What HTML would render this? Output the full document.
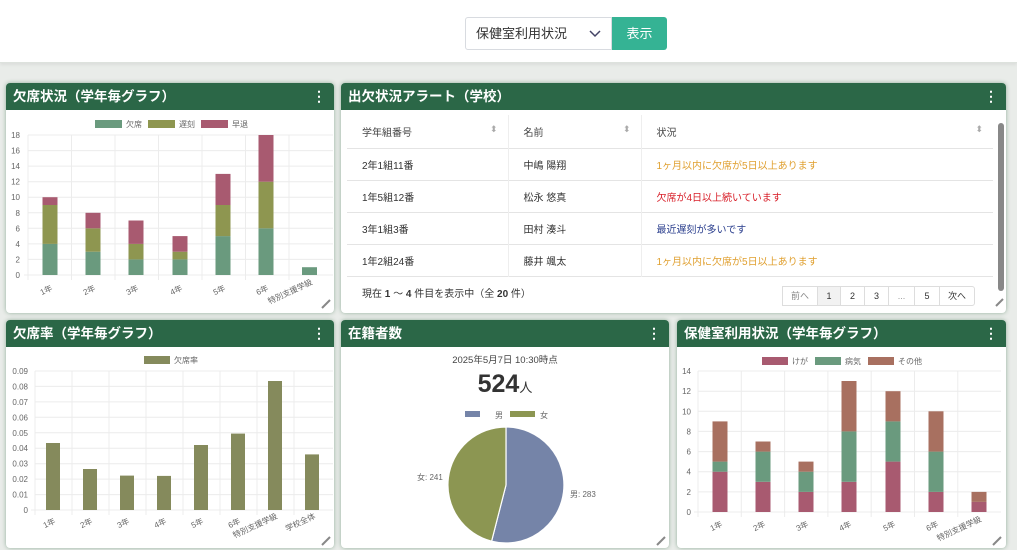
<!DOCTYPE html>
<html><head><meta charset="utf-8"><style>
*{box-sizing:border-box;margin:0;padding:0}
body{width:1017px;height:550px;overflow:hidden;background:#e9ece9;font-family:"Liberation Sans","Noto Sans CJK JP",sans-serif;position:relative;color:#333}
.top{position:absolute;left:0;top:0;width:1017px;height:63px;background:#fff;border-bottom:1px solid #dde2dd;box-shadow:0 2px 3px rgba(0,0,0,.06)}
.sel{position:absolute;left:465px;top:17px;width:147px;height:33px;border:1px solid #d8dbe0;border-radius:3px 0 0 3px;font-size:13px;line-height:31px;padding-left:10px;color:#333;background:#fff}
.btn{position:absolute;left:612px;top:17px;width:55px;height:33px;background:#35b394;color:#fff;font-size:13px;line-height:33px;text-align:center;border-radius:0 3px 3px 0}
.p{position:absolute;background:#fff;border-radius:4px;overflow:hidden;box-shadow:0 0 4px rgba(40,100,60,.45)}
.h{height:27px;background:#2b6747;color:#fff;font-weight:bold;font-size:13.5px;line-height:27px;padding-left:7px;position:relative}
.h i{position:absolute;right:8px;top:0;font-style:normal;font-size:14px}
svg{position:absolute;left:0;top:0}
table{border-collapse:collapse;font-size:10px;table-layout:fixed}
td{height:32px;border-top:1px solid #e4e4e4;padding-left:15px}
th{height:33px;text-align:left;font-weight:normal;padding-left:15px;color:#444;vertical-align:middle}
th span{float:right;margin-right:10px;color:#aaa;font-size:9px}
.pg{position:absolute;top:286px;height:20px;border:1px solid #ddd;font-size:9px;line-height:18px;text-align:center;background:#fff}
</style></head><body>
<div class="top"></div>
<div class="sel">保健室利用状況<svg style="position:absolute;left:123px;top:12px" width="12" height="8"><path d="M1,1 L6,6 L11,1" fill="none" stroke="#446" stroke-width="1.5"/></svg></div>
<div class="btn">表示</div>

<div class="p" style="left:6px;top:83px;width:328px;height:230px"><div class="h">欠席状況（学年毎グラフ）<i>⋮</i></div></div>
<div class="p" style="left:341px;top:83px;width:665px;height:230px"><div class="h">出欠状況アラート（学校）<i>⋮</i></div>
<table style="position:absolute;left:6px;top:32px;width:646px">
<tr><th style="width:161px">学年組番号 <span>⬍</span></th><th style="width:133px;border-left:1px solid #eee">名前 <span>⬍</span></th><th style="border-left:1px solid #eee">状況 <span>⬍</span></th></tr>
<tr><td>2年1組11番</td><td style="border-left:1px solid #eee">中嶋 陽翔</td><td style="border-left:1px solid #eee;color:#e0a030">1ヶ月以内に欠席が5日以上あります</td></tr>
<tr><td>1年5組12番</td><td style="border-left:1px solid #eee">松永 悠真</td><td style="border-left:1px solid #eee;color:#d8202a">欠席が4日以上続いています</td></tr>
<tr><td>3年1組3番</td><td style="border-left:1px solid #eee">田村 湊斗</td><td style="border-left:1px solid #eee;color:#283c8c">最近遅刻が多いです</td></tr>
<tr><td>1年2組24番</td><td style="border-left:1px solid #eee">藤井 颯太</td><td style="border-left:1px solid #eee;color:#e0a030">1ヶ月以内に欠席が5日以上あります</td></tr>
<tr><td style="border-bottom:none" colspan="3">現在 <b>1</b> 〜 <b>4</b> 件目を表示中（全 <b>20</b> 件）</td></tr>
</table>
<div style="position:absolute;left:657px;top:40px;width:6px;height:168px;background:#888;border-radius:3px"></div>
</div>
<div class="pg" style="left:782px;width:36px;color:#888">前へ</div>
<div class="pg" style="left:817px;width:24px;background:#f2f2f2">1</div>
<div class="pg" style="left:840px;width:25px">2</div>
<div class="pg" style="left:864px;width:25px">3</div>
<div class="pg" style="left:888px;width:27px;color:#999">...</div>
<div class="pg" style="left:914px;width:26px">5</div>
<div class="pg" style="left:939px;width:36px;border-radius:0 3px 3px 0">次へ</div>

<div class="p" style="left:6px;top:320px;width:328px;height:228px"><div class="h">欠席率（学年毎グラフ）<i>⋮</i></div></div>
<div class="p" style="left:341px;top:320px;width:328px;height:228px"><div class="h">在籍者数<i>⋮</i></div>
<div style="position:absolute;top:32px;width:100%;text-align:center;font-size:9.5px;color:#444">2025年5月7日 10:30時点</div>
<div style="position:absolute;top:50px;width:100%;text-align:center;font-size:25px;font-weight:bold;color:#333">524<span style="font-size:13px;font-weight:normal">人</span></div>
</div>
<div class="p" style="left:677px;top:320px;width:329px;height:228px"><div class="h">保健室利用状況（学年毎グラフ）<i>⋮</i></div></div>

<svg width="1017" height="550" font-family="Liberation Sans, Noto Sans CJK JP, sans-serif" font-size="8" fill="#666">
<g stroke="#ececec" stroke-width="1">
<line x1="28" y1="135" x2="333" y2="135"/><line x1="28" y1="150.6" x2="333" y2="150.6"/><line x1="28" y1="166.1" x2="333" y2="166.1"/><line x1="28" y1="181.7" x2="333" y2="181.7"/><line x1="28" y1="197.2" x2="333" y2="197.2"/><line x1="28" y1="212.8" x2="333" y2="212.8"/><line x1="28" y1="228.3" x2="333" y2="228.3"/><line x1="28" y1="243.9" x2="333" y2="243.9"/><line x1="28" y1="259.4" x2="333" y2="259.4"/><line x1="24" y1="275" x2="333" y2="275"/>
<line x1="28" y1="135" x2="28" y2="280"/><line x1="71.5" y1="135" x2="71.5" y2="280"/><line x1="115" y1="135" x2="115" y2="280"/><line x1="158.5" y1="135" x2="158.5" y2="280"/><line x1="202" y1="135" x2="202" y2="280"/><line x1="245.5" y1="135" x2="245.5" y2="280"/><line x1="289" y1="135" x2="289" y2="280"/>
</g>
<g text-anchor="end"><text x="20" y="138">18</text><text x="20" y="153.6">16</text><text x="20" y="169">14</text><text x="20" y="184.7">12</text><text x="20" y="200">10</text><text x="20" y="215.8">8</text><text x="20" y="231.3">6</text><text x="20" y="247">4</text><text x="20" y="262.4">2</text><text x="20" y="278">0</text></g>
<rect x="95" y="120" width="27" height="8" fill="#6a9a7e"/><text x="126" y="127">欠席</text>
<rect x="148" y="120" width="27" height="8" fill="#8e9650"/><text x="179" y="127">遅刻</text>
<rect x="201" y="120" width="27" height="8" fill="#a85a70"/><text x="232" y="127">早退</text>
<g fill="#6a9a7e"><rect x="42.5" y="243.9" width="15" height="31.1"/><rect x="85.5" y="251.7" width="15" height="23.3"/><rect x="128.5" y="259.4" width="15" height="15.6"/><rect x="172.5" y="259.4" width="15" height="15.6"/><rect x="215.5" y="236.1" width="15" height="38.9"/><rect x="258.5" y="228.3" width="15" height="46.7"/><rect x="302" y="267.2" width="15" height="7.8"/></g>
<g fill="#8e9650"><rect x="42.5" y="205" width="15" height="38.9"/><rect x="85.5" y="228.3" width="15" height="23.4"/><rect x="128.5" y="243.9" width="15" height="15.5"/><rect x="172.5" y="251.7" width="15" height="7.7"/><rect x="215.5" y="205" width="15" height="31.1"/><rect x="258.5" y="181.7" width="15" height="46.6"/></g>
<g fill="#a85a70"><rect x="42.5" y="197.2" width="15" height="7.8"/><rect x="85.5" y="212.8" width="15" height="15.5"/><rect x="128.5" y="220.5" width="15" height="23.4"/><rect x="172.5" y="236.1" width="15" height="15.6"/><rect x="215.5" y="173.9" width="15" height="31.1"/><rect x="258.5" y="135" width="15" height="46.7"/></g>
<g text-anchor="end"><text transform="translate(53,290) rotate(-25)">1年</text><text transform="translate(96,290) rotate(-25)">2年</text><text transform="translate(139,290) rotate(-25)">3年</text><text transform="translate(183,290) rotate(-25)">4年</text><text transform="translate(226,290) rotate(-25)">5年</text><text transform="translate(269,290) rotate(-25)">6年</text><text transform="translate(313,284) rotate(-25)">特別支援学級</text></g>

<g stroke="#ececec">
<line x1="35" y1="371" x2="333" y2="371"/><line x1="35" y1="386.4" x2="333" y2="386.4"/><line x1="35" y1="401.9" x2="333" y2="401.9"/><line x1="35" y1="417.3" x2="333" y2="417.3"/><line x1="35" y1="432.8" x2="333" y2="432.8"/><line x1="35" y1="448.2" x2="333" y2="448.2"/><line x1="35" y1="463.7" x2="333" y2="463.7"/><line x1="35" y1="479.1" x2="333" y2="479.1"/><line x1="35" y1="494.6" x2="333" y2="494.6"/><line x1="31" y1="510" x2="333" y2="510"/>
<line x1="35" y1="371" x2="35" y2="515"/><line x1="72" y1="371" x2="72" y2="515"/><line x1="109" y1="371" x2="109" y2="515"/><line x1="146" y1="371" x2="146" y2="515"/><line x1="183" y1="371" x2="183" y2="515"/><line x1="220" y1="371" x2="220" y2="515"/><line x1="257" y1="371" x2="257" y2="515"/><line x1="294" y1="371" x2="294" y2="515"/>
</g>
<g text-anchor="end"><text x="28" y="374">0.09</text><text x="28" y="389.4">0.08</text><text x="28" y="404.9">0.07</text><text x="28" y="420.3">0.06</text><text x="28" y="435.8">0.05</text><text x="28" y="451.2">0.04</text><text x="28" y="466.7">0.03</text><text x="28" y="482.1">0.02</text><text x="28" y="497.6">0.01</text><text x="28" y="513">0</text></g>
<rect x="144" y="356" width="26" height="8" fill="#858a5c"/><text x="174" y="363">欠席率</text>
<g fill="#858a5c"><rect x="46" y="443" width="14" height="67"/><rect x="83" y="469" width="14" height="41"/><rect x="120" y="475.6" width="14" height="34.4"/><rect x="157" y="475.9" width="14" height="34.1"/><rect x="194" y="445" width="14" height="65"/><rect x="231" y="433.6" width="14" height="76.4"/><rect x="268" y="381" width="14" height="129"/><rect x="305" y="454.4" width="14" height="55.6"/></g>
<g text-anchor="end"><text transform="translate(56,523) rotate(-25)">1年</text><text transform="translate(93,523) rotate(-25)">2年</text><text transform="translate(130,523) rotate(-25)">3年</text><text transform="translate(167,523) rotate(-25)">4年</text><text transform="translate(204,523) rotate(-25)">5年</text><text transform="translate(241,523) rotate(-25)">6年</text><text transform="translate(278,518) rotate(-25)">特別支援学級</text><text transform="translate(316,518) rotate(-25)">学校全体</text></g>

<rect x="465" y="411" width="15" height="6" fill="#7584a8"/><text x="495" y="418" font-size="8">男</text>
<rect x="510" y="411" width="25" height="6" fill="#8c9652"/><text x="540" y="418" font-size="8">女</text>
<path d="M506,485 L506,427 A58,58 0 1,1 491.6,541.2 Z" fill="#7584a8" stroke="#fff" stroke-width="1.2"/>
<path d="M506,485 L491.6,541.2 A58,58 0 0,1 506,427 Z" fill="#8c9652" stroke="#fff" stroke-width="1.2"/>
<text x="417" y="480">女: 241</text><text x="570" y="497">男: 283</text>

<g stroke="#ececec">
<line x1="698" y1="371" x2="1001" y2="371"/><line x1="698" y1="391.2" x2="1001" y2="391.2"/><line x1="698" y1="411.3" x2="1001" y2="411.3"/><line x1="698" y1="431.4" x2="1001" y2="431.4"/><line x1="698" y1="451.6" x2="1001" y2="451.6"/><line x1="698" y1="471.7" x2="1001" y2="471.7"/><line x1="698" y1="491.9" x2="1001" y2="491.9"/><line x1="694" y1="512" x2="1001" y2="512"/>
<line x1="698" y1="371" x2="698" y2="517"/><line x1="741.3" y1="371" x2="741.3" y2="517"/><line x1="784.6" y1="371" x2="784.6" y2="517"/><line x1="827.9" y1="371" x2="827.9" y2="517"/><line x1="871.2" y1="371" x2="871.2" y2="517"/><line x1="914.5" y1="371" x2="914.5" y2="517"/><line x1="957.8" y1="371" x2="957.8" y2="517"/>
</g>
<g text-anchor="end"><text x="691" y="374">14</text><text x="691" y="394.2">12</text><text x="691" y="414.3">10</text><text x="691" y="434.4">8</text><text x="691" y="454.6">6</text><text x="691" y="474.7">4</text><text x="691" y="494.9">2</text><text x="691" y="515">0</text></g>
<rect x="762" y="357" width="26" height="8" fill="#a85a70"/><text x="792" y="364">けが</text>
<rect x="815" y="357" width="26" height="8" fill="#6a9a7e"/><text x="845" y="364">病気</text>
<rect x="868" y="357" width="26" height="8" fill="#a87060"/><text x="898" y="364">その他</text>
<g fill="#a85a70"><rect x="712.5" y="471.7" width="15" height="40.3"/><rect x="755.5" y="481.8" width="15" height="30.2"/><rect x="798.5" y="491.9" width="15" height="20.1"/><rect x="841.5" y="481.8" width="15" height="30.2"/><rect x="885.5" y="461.6" width="15" height="50.4"/><rect x="928.5" y="491.9" width="15" height="20.1"/><rect x="971.5" y="501.9" width="15" height="10.1"/></g>
<g fill="#6a9a7e"><rect x="712.5" y="461.6" width="15" height="10.1"/><rect x="755.5" y="451.6" width="15" height="30.2"/><rect x="798.5" y="471.7" width="15" height="20.2"/><rect x="841.5" y="431.4" width="15" height="50.4"/><rect x="885.5" y="421.4" width="15" height="40.2"/><rect x="928.5" y="451.6" width="15" height="40.3"/></g>
<g fill="#a87060"><rect x="712.5" y="421.4" width="15" height="40.2"/><rect x="755.5" y="441.5" width="15" height="10.1"/><rect x="798.5" y="461.6" width="15" height="10.1"/><rect x="841.5" y="381" width="15" height="50.4"/><rect x="885.5" y="391.2" width="15" height="30.2"/><rect x="928.5" y="411.3" width="15" height="40.3"/><rect x="971.5" y="491.9" width="15" height="10"/></g>
<g text-anchor="end"><text transform="translate(723,526) rotate(-25)">1年</text><text transform="translate(766,526) rotate(-25)">2年</text><text transform="translate(809,526) rotate(-25)">3年</text><text transform="translate(852,526) rotate(-25)">4年</text><text transform="translate(896,526) rotate(-25)">5年</text><text transform="translate(939,526) rotate(-25)">6年</text><text transform="translate(982,521) rotate(-25)">特別支援学級</text></g>
<g stroke="#888" stroke-width="2"><line x1="322" y1="308" x2="330" y2="300"/><line x1="322" y1="545" x2="330" y2="537"/><line x1="657" y1="545" x2="665" y2="537"/><line x1="993" y1="545" x2="1001" y2="537"/><line x1="996" y1="306" x2="1003" y2="299"/></g>
</svg>
</body></html>
